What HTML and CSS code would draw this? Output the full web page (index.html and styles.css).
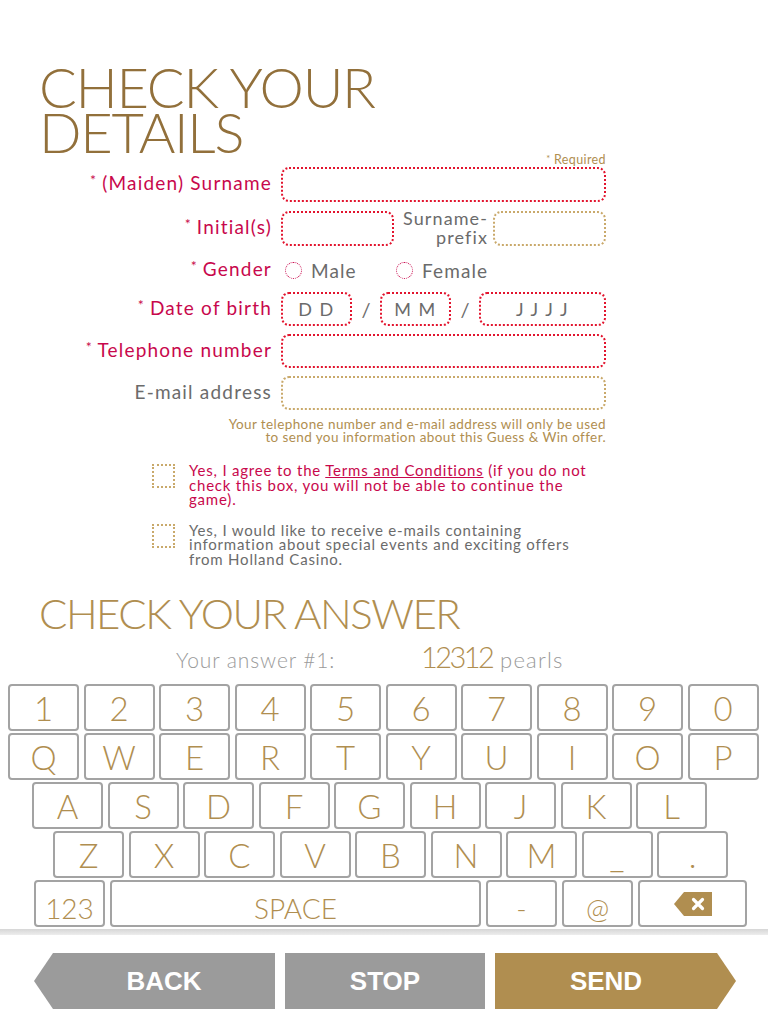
FILE: index.html
```html
<!DOCTYPE html>
<html>
<head>
<meta charset="utf-8">
<title>Check your details</title>
<link rel="stylesheet" href="styles.css">
</head>
<body>
<div class="page">
  <h1 class="title">CHECK YOUR<br>DETAILS</h1>

  <div class="form">
    <div class="required"><span class="ast">*</span> Required</div>

    <div class="row r-surname">
      <label class="lbl req"><span class="ast">*</span> (Maiden) Surname</label>
      <div class="field red wide"></div>
    </div>

    <div class="row r-initials">
      <label class="lbl req"><span class="ast">*</span> Initial(s)</label>
      <div class="field red small"></div>
      <span class="prefix-lbl">Surname-<br>prefix</span>
      <div class="field gold small"></div>
    </div>

    <div class="row r-gender">
      <label class="lbl req"><span class="ast">*</span> Gender</label>
      <div class="options">
        <span class="opt opt-male"><span class="radio"></span>Male</span>
        <span class="opt"><span class="radio"></span>Female</span>
      </div>
    </div>

    <div class="row r-dob">
      <label class="lbl req"><span class="ast">*</span> Date of birth</label>
      <div class="field red dd">D D</div>
      <span class="slash">/</span>
      <div class="field red mm">M M</div>
      <span class="slash">/</span>
      <div class="field red yy">J J J J</div>
    </div>

    <div class="row r-tel">
      <label class="lbl req"><span class="ast">*</span> Telephone number</label>
      <div class="field red wide"></div>
    </div>

    <div class="row r-mail">
      <label class="lbl plain">E-mail address</label>
      <div class="field gold wide"></div>
    </div>

    <p class="note">Your telephone number and e-mail address will only be used<br>to send you information about this Guess &amp; Win offer.</p>
  </div>

  <div class="check check-terms">
    <span class="cb"></span>
    <p class="check-text terms">Yes, I agree to the <u>Terms and Conditions</u> (if you do not<br>check this box, you will not be able to continue the<br>game).</p>
  </div>
  <div class="check check-mail">
    <span class="cb"></span>
    <p class="check-text info">Yes, I would like to receive e-mails containing<br>information about special events and exciting offers<br>from Holland Casino.</p>
  </div>

  <h2 class="subtitle">CHECK YOUR ANSWER</h2>
  <div class="answer">
    <span class="ans-lbl">Your answer #1:</span>
    <span class="ans-num">12312</span>
    <span class="ans-unit">pearls</span>
  </div>

  <div class="keyboard">
    <div class="krow r-num">
      <span class="key">1</span><span class="key">2</span><span class="key">3</span><span class="key">4</span><span class="key">5</span><span class="key">6</span><span class="key">7</span><span class="key">8</span><span class="key">9</span><span class="key">0</span>
    </div>
    <div class="krow r-q">
      <span class="key">Q</span><span class="key">W</span><span class="key">E</span><span class="key">R</span><span class="key">T</span><span class="key">Y</span><span class="key">U</span><span class="key">I</span><span class="key">O</span><span class="key">P</span>
    </div>
    <div class="krow r-a">
      <span class="key">A</span><span class="key">S</span><span class="key">D</span><span class="key">F</span><span class="key">G</span><span class="key">H</span><span class="key">J</span><span class="key">K</span><span class="key">L</span>
    </div>
    <div class="krow r-z">
      <span class="key">Z</span><span class="key">X</span><span class="key">C</span><span class="key">V</span><span class="key">B</span><span class="key">N</span><span class="key">M</span><span class="key">_</span><span class="key">.</span>
    </div>
    <div class="krow r-bottom">
      <span class="key low">123</span>
      <span class="key low space">SPACE</span>
      <span class="key low">-</span>
      <span class="key low">@</span>
      <span class="key bksp">
        <svg width="38" height="24" viewBox="0 0 38 24" aria-hidden="true">
          <polygon points="0,12 10,0 38,0 38,24 10,24" fill="#b08e50"/>
          <path d="M19.5 7.5 L28.5 16.5 M28.5 7.5 L19.5 16.5" stroke="#fff" stroke-width="3.2" stroke-linecap="round"/>
        </svg>
      </span>
    </div>
  </div>

  <div class="band"></div>

  <div class="nav">
    <span class="btn back">BACK</span>
    <span class="btn stop">STOP</span>
    <span class="btn send">SEND</span>
  </div>
</div>
</body>
</html>
```

FILE: styles.css
```css
* { box-sizing: border-box; }

body {
  margin: 0;
  background: #ffffff;
  font-family: Lato, "DejaVu Sans", sans-serif;
}

.page {
  width: 768px;
  height: 1024px;
  overflow: hidden;
}

.title {
  margin: 0;
  padding: 64px 0 0 39px;
  font-size: 56px;
  line-height: 45px;
  font-weight: 300;
  color: #92703b;
  letter-spacing: -1.3px;
}

.form {
  width: 606px;
}

.required {
  margin-top: -2px;
  height: 13px;
  text-align: right;
  font-size: 12.5px;
  line-height: 13px;
  letter-spacing: 0.4px;
  color: #b08e50;
}

.ast {
  color: #c8084c;
  font-size: 0.75em;
  vertical-align: 0.35em;
  letter-spacing: 0;
}

.required .ast {
  color: #b08e50;
  vertical-align: 0.2em;
}

.row {
  display: flex;
  align-items: center;
}

.lbl {
  width: 281px;
  padding-right: 9px;
  text-align: right;
  font-size: 19px;
  letter-spacing: 1.2px;
  white-space: nowrap;
  margin-top: -4px;
}

.lbl.req { color: #c8084c; }
.lbl.plain { color: #6b6b6b; }

.field {
  height: 35px;
  border: 2px dotted #e2142e;
  border-radius: 8px;
}

.field.gold { border-color: #c9a96b; }

.wide { width: 325px; }
.small { width: 113px; }

.r-surname { margin-top: 2px; }
.r-initials { margin-top: 7px; }

.prefix-lbl {
  width: 99px;
  padding-right: 5px;
  text-align: right;
  font-size: 18px;
  line-height: 19px;
  letter-spacing: 1.1px;
  color: #6b6b6b;
}

.r-gender {
  margin-top: 11px;
  height: 24px;
}

.options {
  display: flex;
  align-items: center;
  padding-left: 4px;
  font-size: 19px;
  letter-spacing: 1.1px;
  color: #6b6b6b;
}

.opt {
  display: flex;
  align-items: center;
  gap: 9px;
}

.opt-male { width: 111px; }

.radio {
  width: 17px;
  height: 17px;
  border: 1.5px dotted #c8084c;
  border-radius: 50%;
}

.r-dob { margin-top: 10px; }
.r-tel { margin-top: 8px; }
.r-mail { margin-top: 8px; }

.r-dob .field {
  height: 34px;
  display: flex;
  align-items: center;
  justify-content: center;
  color: #6b6b6b;
  font-size: 18px;
  letter-spacing: 1.5px;
}

.r-tel .field,
.r-mail .field { height: 34px; }

.dd, .mm { width: 71px; }
.yy { width: 127px; }

.slash {
  width: 28px;
  text-align: center;
  font-size: 20px;
  color: #6b6b6b;
}

.note {
  margin: 8px 0 0;
  text-align: right;
  font-size: 13.5px;
  line-height: 13px;
  letter-spacing: 0.4px;
  color: #b08e50;
}

.check {
  display: flex;
  align-items: flex-start;
  gap: 14px;
  padding-left: 152px;
}

.check-terms { margin-top: 19px; }
.check-mail { margin-top: 16px; }

.cb {
  flex: none;
  width: 23px;
  height: 24px;
  margin-top: 1px;
  border: 2px dotted #c9a96b;
}

.check-text {
  margin: 0;
  font-size: 15px;
  line-height: 14.5px;
  letter-spacing: 0.8px;
  white-space: nowrap;
}

.terms { color: #c8084c; }
.info { color: #6b6b6b; }

.subtitle {
  margin: 26px 0 0;
  padding-left: 39px;
  font-size: 42px;
  line-height: 43px;
  font-weight: 300;
  color: #b08e50;
  letter-spacing: -1.5px;
}

.answer {
  display: flex;
  align-items: baseline;
  height: 40px;
  padding-left: 176px;
  margin-top: 4px;
  color: #9a9a9a;
  font-weight: 300;
}

.ans-lbl {
  width: 245px;
  font-size: 21px;
  letter-spacing: 0.9px;
}

.ans-num {
  font-size: 29px;
  color: #b08e50;
  letter-spacing: -2.6px;
}

.ans-unit {
  margin-left: 8px;
  font-size: 22px;
  letter-spacing: 1.2px;
}

.keyboard {
  margin-top: 5px;
}

.krow {
  display: flex;
  gap: 4.5px;
  margin-bottom: 2px;
}

.r-num, .r-q { padding-left: 8px; }
.r-a { padding-left: 32px; }
.r-z { padding-left: 53px; }
.r-bottom { padding-left: 34px; gap: 5px; }

.key {
  flex: none;
  width: 71px;
  height: 47px;
  border: 2px solid #a3a3a3;
  border-radius: 4px;
  display: flex;
  align-items: center;
  justify-content: center;
  color: #b08e50;
  font-size: 33px;
  font-weight: 300;
}

.key.low {
  font-size: 28px;
  padding-top: 8px;
}

.key.space { width: 371px; }
.key.bksp { width: 109px; padding-top: 1px; }

.band {
  height: 6px;
  margin-top: 0;
  background: linear-gradient(#d6d6d6, #ededed);
}

.nav {
  display: flex;
  gap: 10px;
  margin-top: 18px;
  padding-left: 34px;
}

.btn {
  height: 56px;
  display: flex;
  align-items: center;
  justify-content: center;
  color: #ffffff;
  font-family: "Liberation Sans", Arial, sans-serif;
  font-weight: bold;
  font-size: 26px;
}

.back {
  width: 241px;
  padding-left: 19px;
  background: #9b9b9b;
  clip-path: polygon(19px 0, 100% 0, 100% 100%, 19px 100%, 0 50%);
}

.stop {
  width: 200px;
  background: #9b9b9b;
}

.send {
  width: 241px;
  padding-right: 19px;
  background: #b08e50;
  clip-path: polygon(0 0, calc(100% - 19px) 0, 100% 50%, calc(100% - 19px) 100%, 0 100%);
}
```
